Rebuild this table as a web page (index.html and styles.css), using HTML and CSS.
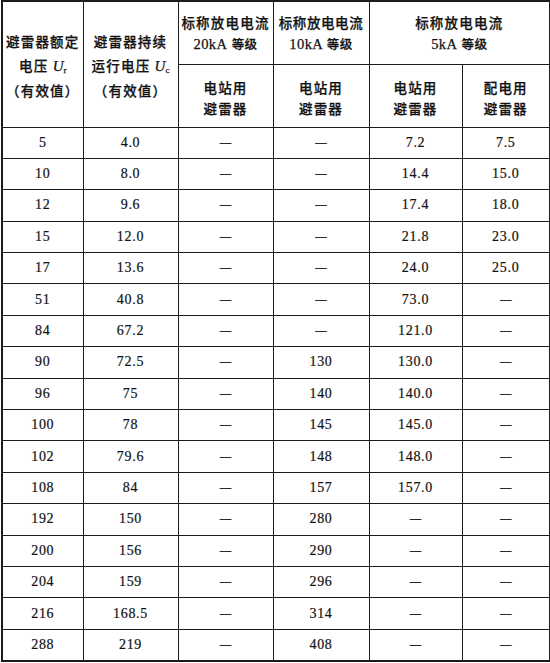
FILE: index.html
```html
<!DOCTYPE html>
<html lang="zh-CN">
<head>
<meta charset="utf-8">
<title>避雷器额定电压</title>
<link rel="stylesheet" href="styles.css">
</head>
<body>
<table class="spec">
  <colgroup>
    <col class="c1"><col class="c2"><col class="c3"><col class="c4"><col class="c5"><col class="c6">
  </colgroup>
  <thead>
    <tr class="h1">
      <th rowspan="2" class="tall">避雷器额定<br>电压 <i class="u">U</i><sub>r</sub><br>（有效值）</th>
      <th rowspan="2" class="tall">避雷器持续<br>运行电压 <i class="u">U</i><sub>c</sub><br>（有效值）</th>
      <th>标称放电电流<br><span class="n">20kA</span> <span class="s">等级</span></th>
      <th class="tight">标称放电电流<br><span class="n">10kA</span> <span class="s">等级</span></th>
      <th colspan="2">标称放电电流<br><span class="n">5kA</span> <span class="s">等级</span></th>
    </tr>
    <tr class="h2">
      <th>电站用<br>避雷器</th>
      <th>电站用<br>避雷器</th>
      <th>电站用<br>避雷器</th>
      <th>配电用<br>避雷器</th>
    </tr>
  </thead>
  <tbody>
    <tr><td>5</td><td>4.0</td><td class="d">—</td><td class="d">—</td><td>7.2</td><td>7.5</td></tr>
    <tr><td>10</td><td>8.0</td><td class="d">—</td><td class="d">—</td><td>14.4</td><td>15.0</td></tr>
    <tr><td>12</td><td>9.6</td><td class="d">—</td><td class="d">—</td><td>17.4</td><td>18.0</td></tr>
    <tr><td>15</td><td>12.0</td><td class="d">—</td><td class="d">—</td><td>21.8</td><td>23.0</td></tr>
    <tr><td>17</td><td>13.6</td><td class="d">—</td><td class="d">—</td><td>24.0</td><td>25.0</td></tr>
    <tr><td>51</td><td>40.8</td><td class="d">—</td><td class="d">—</td><td>73.0</td><td class="d">—</td></tr>
    <tr><td>84</td><td>67.2</td><td class="d">—</td><td class="d">—</td><td>121.0</td><td class="d">—</td></tr>
    <tr><td>90</td><td>72.5</td><td class="d">—</td><td>130</td><td>130.0</td><td class="d">—</td></tr>
    <tr><td>96</td><td>75</td><td class="d">—</td><td>140</td><td>140.0</td><td class="d">—</td></tr>
    <tr><td>100</td><td>78</td><td class="d">—</td><td>145</td><td>145.0</td><td class="d">—</td></tr>
    <tr><td>102</td><td>79.6</td><td class="d">—</td><td>148</td><td>148.0</td><td class="d">—</td></tr>
    <tr><td>108</td><td>84</td><td class="d">—</td><td>157</td><td>157.0</td><td class="d">—</td></tr>
    <tr><td>192</td><td>150</td><td class="d">—</td><td>280</td><td class="d">—</td><td class="d">—</td></tr>
    <tr><td>200</td><td>156</td><td class="d">—</td><td>290</td><td class="d">—</td><td class="d">—</td></tr>
    <tr><td>204</td><td>159</td><td class="d">—</td><td>296</td><td class="d">—</td><td class="d">—</td></tr>
    <tr><td>216</td><td>168.5</td><td class="d">—</td><td>314</td><td class="d">—</td><td class="d">—</td></tr>
    <tr><td>288</td><td>219</td><td class="d">—</td><td>408</td><td class="d">—</td><td class="d">—</td></tr>
  </tbody>
</table>
</body>
</html>
```

FILE: styles.css
```css
html, body {
  margin: 0;
  padding: 0;
  background: #ffffff;
}

.spec {
  border-collapse: collapse;
  table-layout: fixed;
  width: 549px;
  margin: 0 0 0 1px;
  color: #111111;
  border: 2px solid #1c1c1c;
}

.c1 { width: 81px; }
.c2 { width: 95px; }
.c3 { width: 95px; }
.c4 { width: 96px; }
.c5 { width: 93px; }
.c6 { width: 88px; }

.spec th,
.spec td {
  border: 1px solid #1c1c1c;
  padding: 0;
  text-align: center;
  vertical-align: middle;
}

.spec th {
  font-family: "Noto Sans CJK SC", "Noto Sans", sans-serif;
  font-weight: 500;
  font-size: 13.5px;
  letter-spacing: 1.2px;
  line-height: 21px;
  -webkit-text-stroke: 0.25px #111111;
}

.spec th.tall {
  line-height: 24px;
}

.spec th.tight {
  letter-spacing: 0.6px;
}

.h1 { height: 63px; }
.h2 { height: 63px; }

.h1 th { padding-top: 2px; }
.h2 th { padding-top: 4px; }

.spec .n {
  font-family: "Liberation Serif", serif;
  font-size: 14.5px;
  letter-spacing: 0.4px;
}

.spec .s {
  font-size: 12.5px;
  letter-spacing: 0.4px;
}

.spec .u {
  font-family: "Liberation Serif", serif;
  font-size: 15px;
  letter-spacing: 0;
}

.spec sub {
  font-family: "Liberation Serif", serif;
  font-size: 9px;
  letter-spacing: 0;
  vertical-align: -2px;
  line-height: 0;
}

.spec tbody tr {
  height: 31.4px;
}

.spec td {
  font-family: "Liberation Serif", serif;
  font-size: 14px;
  letter-spacing: 0.7px;
  line-height: 16px;
  -webkit-text-stroke: 0.2px #111111;
}

.spec td.d {
  font-family: "DejaVu Sans", sans-serif;
  font-size: 13px;
  letter-spacing: 0;
  color: #2a2a2a;
  -webkit-text-stroke: 0;
}
```
